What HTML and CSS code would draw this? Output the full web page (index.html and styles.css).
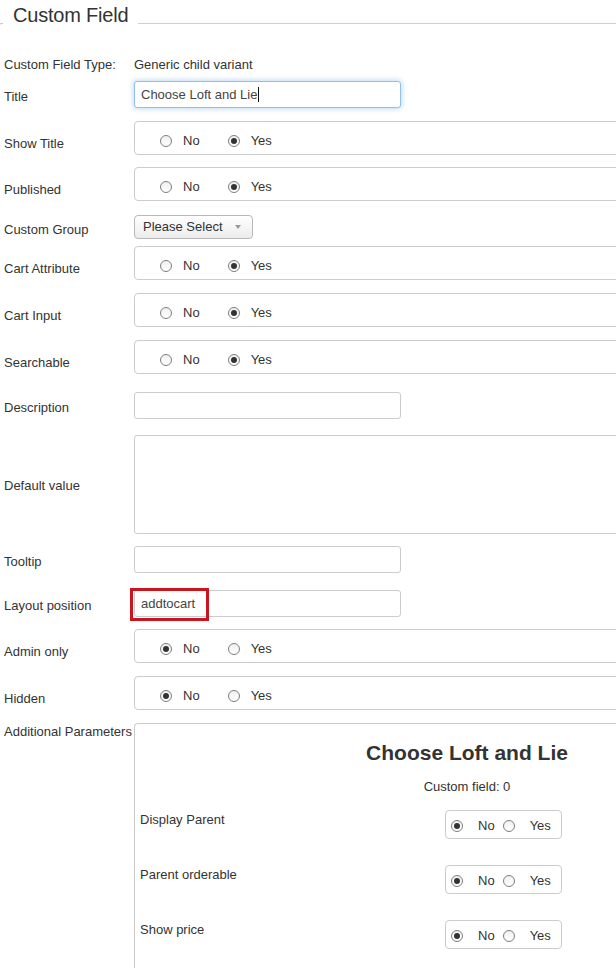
FILE: index.html
```html
<!DOCTYPE html>
<html>
<head>
<meta charset="utf-8">
<title>Custom Field</title>
<link rel="stylesheet" href="styles.css">
</head>
<body>
<div class="page">
  <div class="fs-head">
    <span class="fs-corner"></span>
    <span class="fs-title">Custom Field</span>
    <span class="fs-line"></span>
  </div>

  <div class="form">
    <div class="row gap-8">
      <div class="lbl">Custom Field Type:</div>
      <div class="val">Generic child variant</div>
    </div>

    <div class="row gap-13">
      <div class="lbl lbl-in">Title</div>
      <div class="field"><div class="input focus">Choose Loft and Lie<span class="caret"></span></div></div>
    </div>

    <div class="row gap-12">
      <div class="lbl lbl-rd">Show Title</div>
      <div class="radios">
        <span class="opt"><span class="dot"></span>No</span>
        <span class="opt"><span class="dot on"></span>Yes</span>
      </div>
    </div>

    <div class="row gap-14">
      <div class="lbl lbl-rd">Published</div>
      <div class="radios">
        <span class="opt"><span class="dot"></span>No</span>
        <span class="opt"><span class="dot on"></span>Yes</span>
      </div>
    </div>

    <div class="row gap-7">
      <div class="lbl lbl-in">Custom Group</div>
      <div class="field"><div class="select">Please Select<span class="caret-down"></span></div></div>
    </div>

    <div class="row gap-13">
      <div class="lbl lbl-rd">Cart Attribute</div>
      <div class="radios">
        <span class="opt"><span class="dot"></span>No</span>
        <span class="opt"><span class="dot on"></span>Yes</span>
      </div>
    </div>

    <div class="row gap-13">
      <div class="lbl lbl-rd">Cart Input</div>
      <div class="radios">
        <span class="opt"><span class="dot"></span>No</span>
        <span class="opt"><span class="dot on"></span>Yes</span>
      </div>
    </div>

    <div class="row gap-18">
      <div class="lbl lbl-rd">Searchable</div>
      <div class="radios">
        <span class="opt"><span class="dot"></span>No</span>
        <span class="opt"><span class="dot on"></span>Yes</span>
      </div>
    </div>

    <div class="row gap-16">
      <div class="lbl lbl-in">Description</div>
      <div class="field"><div class="input"></div></div>
    </div>

    <div class="row gap-12">
      <div class="lbl lbl-ta">Default value</div>
      <div class="field"><div class="textarea"></div></div>
    </div>

    <div class="row gap-17">
      <div class="lbl lbl-tt">Tooltip</div>
      <div class="field"><div class="input"></div></div>
    </div>

    <div class="row gap-12">
      <div class="lbl lbl-in">Layout position</div>
      <div class="field marked"><div class="input">addtocart</div><span class="highlight"></span></div>
    </div>

    <div class="row gap-13">
      <div class="lbl lbl-rd">Admin only</div>
      <div class="radios">
        <span class="opt"><span class="dot on"></span>No</span>
        <span class="opt"><span class="dot"></span>Yes</span>
      </div>
    </div>

    <div class="row gap-13">
      <div class="lbl lbl-rd">Hidden</div>
      <div class="radios">
        <span class="opt"><span class="dot on"></span>No</span>
        <span class="opt"><span class="dot"></span>Yes</span>
      </div>
    </div>

    <div class="row row-top">
      <div class="lbl lbl-top">Additional Parameters</div>
      <div class="params">
        <div class="p-title">Choose Loft and Lie</div>
        <div class="p-sub">Custom field: 0</div>

        <div class="prow prow-first">
          <div class="plbl">Display Parent</div>
          <div class="pradios">
            <span class="popt"><span class="dot on"></span>No</span>
            <span class="popt"><span class="dot"></span>Yes</span>
          </div>
        </div>

        <div class="prow">
          <div class="plbl">Parent orderable</div>
          <div class="pradios">
            <span class="popt"><span class="dot on"></span>No</span>
            <span class="popt"><span class="dot"></span>Yes</span>
          </div>
        </div>

        <div class="prow">
          <div class="plbl">Show price</div>
          <div class="pradios">
            <span class="popt"><span class="dot on"></span>No</span>
            <span class="popt"><span class="dot"></span>Yes</span>
          </div>
        </div>
      </div>
    </div>
  </div>
</div>
</body>
</html>
```

FILE: styles.css
```css
html, body {
  margin: 0;
  padding: 0;
  background: #fff;
  overflow: hidden;
}

body {
  font-family: "Liberation Sans", Arial, sans-serif;
  font-size: 13px;
  line-height: 16px;
  color: #333;
}

.page {
  width: 616px;
  height: 968px;
  overflow: hidden;
}

/* Fieldset header */
.fs-head {
  display: flex;
  align-items: flex-start;
  height: 27px;
}

.fs-corner {
  width: 4px;
  height: 3px;
  margin-left: -2px;
  margin-top: 23px;
  border-top: 1px solid #c8c8c8;
  border-left: 1px solid #c8c8c8;
  border-top-left-radius: 6px;
}

.fs-title {
  font-size: 20px;
  line-height: 24px;
  letter-spacing: -0.2px;
  margin-top: 3px;
  padding: 0 10px 0 10px;
  color: #333;
}

.fs-line {
  flex: 1;
  margin-top: 23px;
  border-top: 1px solid #cfcfcf;
}

/* Form rows */
.form {
  width: 796px;
  margin-top: 30px;
  padding-left: 4px;
}

.row {
  display: grid;
  grid-template-columns: 130px 1fr;
  align-items: center;
}

.gap-7 { margin-bottom: 7px; }
.gap-8 { margin-bottom: 8px; }
.gap-12 { margin-bottom: 12px; }
.gap-13 { margin-bottom: 13px; }
.gap-14 { margin-bottom: 14px; }
.gap-16 { margin-bottom: 16px; }
.gap-17 { margin-bottom: 17px; }
.gap-18 { margin-bottom: 18px; }

.lbl {
  white-space: nowrap;
}

.lbl-in { padding-top: 5px; }
.lbl-tt { padding-top: 5px; }
.lbl-ta { padding-top: 2px; }
.lbl-rd { padding-top: 11px; }

.row-top {
  align-items: start;
}

.lbl-top {
  margin-top: 1px;
}

.field {
  display: flex;
}

.marked {
  position: relative;
}

/* Inputs */
.input {
  box-sizing: border-box;
  width: 267px;
  height: 27px;
  border: 1px solid #ccc;
  border-radius: 3px;
  padding: 0 6px;
  display: flex;
  align-items: center;
  color: #444;
  background: #fff;
}

.input.focus {
  border-color: #92c0e8;
  box-shadow: 0 0 5px 1px rgba(110, 175, 235, 0.45);
}

.caret {
  display: inline-block;
  width: 1px;
  height: 15px;
  margin-left: 1px;
  background: #111;
}

.highlight {
  position: absolute;
  left: -4px;
  top: -2px;
  width: 79px;
  height: 33px;
  box-sizing: border-box;
  border: 3px solid #c9161e;
}

.textarea {
  box-sizing: border-box;
  width: 100%;
  height: 99px;
  border: 1px solid #ccc;
  border-radius: 3px;
  background: #fff;
}

.select {
  box-sizing: border-box;
  width: 119px;
  height: 24px;
  border: 1px solid #b8b8b8;
  border-radius: 4px;
  background: linear-gradient(#ffffff, #ececec);
  padding: 0 11px 0 8px;
  display: flex;
  align-items: center;
  justify-content: space-between;
  color: #333;
}

.caret-down {
  width: 0;
  height: 0;
  border-left: 3px solid transparent;
  border-right: 3px solid transparent;
  border-top: 4px solid #999;
  margin-bottom: 1px;
}

/* Radio groups */
.radios {
  box-sizing: border-box;
  height: 34px;
  border: 1px solid #cbcbcb;
  border-radius: 4px;
  padding: 6px 0 0 25px;
  display: flex;
  align-items: center;
}

.opt {
  display: flex;
  align-items: center;
  gap: 11px;
  margin-right: 28px;
}

.dot {
  box-sizing: border-box;
  width: 12px;
  height: 12px;
  border: 1px solid #7e7e7e;
  border-radius: 50%;
  background: linear-gradient(#f0f0f0, #ffffff);
  display: flex;
  align-items: center;
  justify-content: center;
}

.dot.on::after {
  content: "";
  width: 6px;
  height: 6px;
  border-radius: 50%;
  background: #333;
}

/* Additional parameters */
.params {
  box-sizing: border-box;
  height: 300px;
  border: 1px solid #cbcbcb;
  border-bottom: none;
  border-top-left-radius: 4px;
  padding: 0 5px;
}

.p-title {
  margin-top: 17px;
  text-align: center;
  font-size: 21px;
  line-height: 24px;
  font-weight: bold;
  color: #333;
}

.p-sub {
  margin-top: 14px;
  text-align: center;
}

.prow {
  display: grid;
  grid-template-columns: 305px auto;
  align-items: start;
  justify-items: start;
  margin-top: 26px;
}

.prow-first {
  margin-top: 15px;
}

.plbl {
  padding-top: 2px;
}

.pradios {
  box-sizing: border-box;
  height: 29px;
  border: 1px solid #cbcbcb;
  border-radius: 4px;
  padding: 2px 10px 0 5px;
  display: flex;
  align-items: center;
}

.popt {
  display: flex;
  align-items: center;
  gap: 15px;
}

.popt + .popt {
  margin-left: 8px;
}
```
